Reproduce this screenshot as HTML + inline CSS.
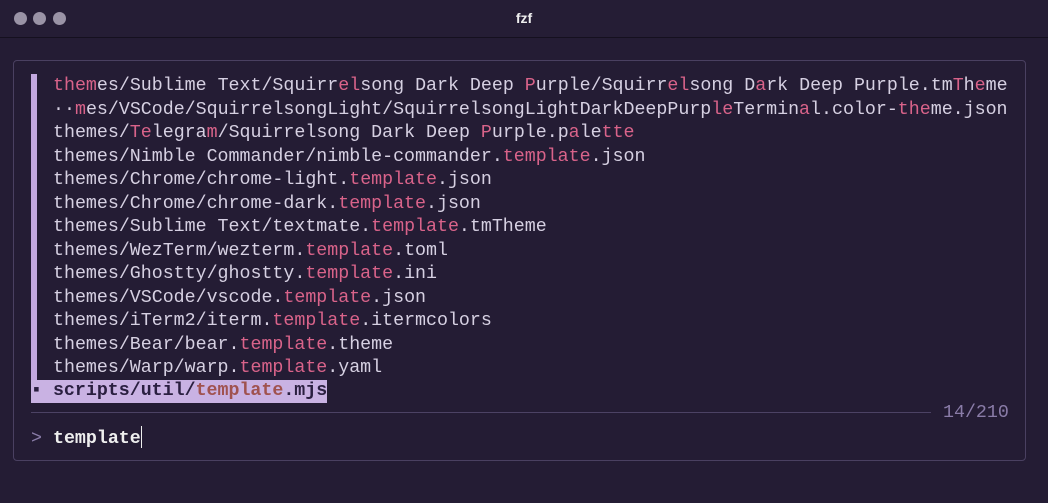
<!DOCTYPE html>
<html><head><meta charset="utf-8"><style>
html,body{margin:0;padding:0;width:1048px;height:503px;overflow:hidden;background:#241c34;}
.title{position:absolute;left:0;top:0;width:1048px;height:37px;background:#251d35;border-bottom:1px solid #15101f;}
.dot{position:absolute;top:12px;width:13px;height:13px;border-radius:50%;background:#9a93a6;}
.t{position:absolute;top:10px;left:0;width:1048px;text-align:center;color:#eee;font:bold 14px "Liberation Sans",sans-serif;}
.box{position:absolute;left:13px;top:60px;width:1011px;height:399px;border:1px solid #4a4061;border-radius:4px;}
.bar{position:absolute;left:31px;top:74px;width:6px;height:306px;background:#c3a8e0;}
.lines{position:absolute;left:53px;top:75px;font:18.3px "Liberation Mono",monospace;color:#d6d0e2;white-space:pre;line-height:23.5px;}
.m{color:#d9638a}
.sel{position:absolute;left:31px;top:380px;width:296px;height:23px;background:#c9b2e3;}
.selt{position:absolute;left:31px;top:380px;font:bold 18.3px "Liberation Mono",monospace;color:#2a1f40;white-space:pre;line-height:23px;}
.sep{position:absolute;left:31px;top:412px;width:900px;height:1px;background:#4c4264;}
.cnt{position:absolute;left:943px;top:403px;font:18.3px "Liberation Mono",monospace;color:#8a7ca8;}
.pr{position:absolute;left:31px;top:426px;font:18.3px "Liberation Mono",monospace;color:#eee;white-space:pre;}
</style></head><body>
<div class="title"><div class="dot" style="left:14px"></div><div class="dot" style="left:33px"></div><div class="dot" style="left:53px"></div><div class="t">fzf</div></div>
<div class="box"></div>
<div class="bar"></div>
<div class="lines"><span class="m">th</span><span class="m">em</span>es/Sublime Text/Squirr<span class="m">el</span>song Dark Deep <span class="m">P</span>urple/Squirr<span class="m">el</span>song D<span class="m">a</span>rk Deep Purple.tm<span class="m">T</span>h<span class="m">e</span>me
··<span class="m">m</span>es/VSCode/SquirrelsongLight/SquirrelsongLightDarkDeepPurp<span class="m">le</span>Termin<span class="m">a</span>l.color-<span class="m">th</span><span class="m">e</span>me.json
themes/<span class="m">Te</span>legra<span class="m">m</span>/Squirrelsong Dark Deep <span class="m">P</span>urple.p<span class="m">a</span>le<span class="m">tte</span>
themes/Nimble Commander/nimble-commander.<span class="m">template</span>.json
themes/Chrome/chrome-light.<span class="m">template</span>.json
themes/Chrome/chrome-dark.<span class="m">template</span>.json
themes/Sublime Text/textmate.<span class="m">template</span>.tmTheme
themes/WezTerm/wezterm.<span class="m">template</span>.toml
themes/Ghostty/ghostty.<span class="m">template</span>.ini
themes/VSCode/vscode.<span class="m">template</span>.json
themes/iTerm2/iterm.<span class="m">template</span>.itermcolors
themes/Bear/bear.<span class="m">template</span>.theme
themes/Warp/warp.<span class="m">template</span>.yaml</div>
<div class="sel"></div>
<div class="selt">▪ scripts/util/<span style="color:#a0524f">template</span>.mjs</div>
<div class="sep"></div>
<div class="cnt">14/210</div>
<div class="pr"><span style="color:#8a7ca8">&gt;</span> <b>template</b><span style="display:inline-block;width:1px;height:22px;background:#eee;vertical-align:-5px"></span></div>
</body></html>
